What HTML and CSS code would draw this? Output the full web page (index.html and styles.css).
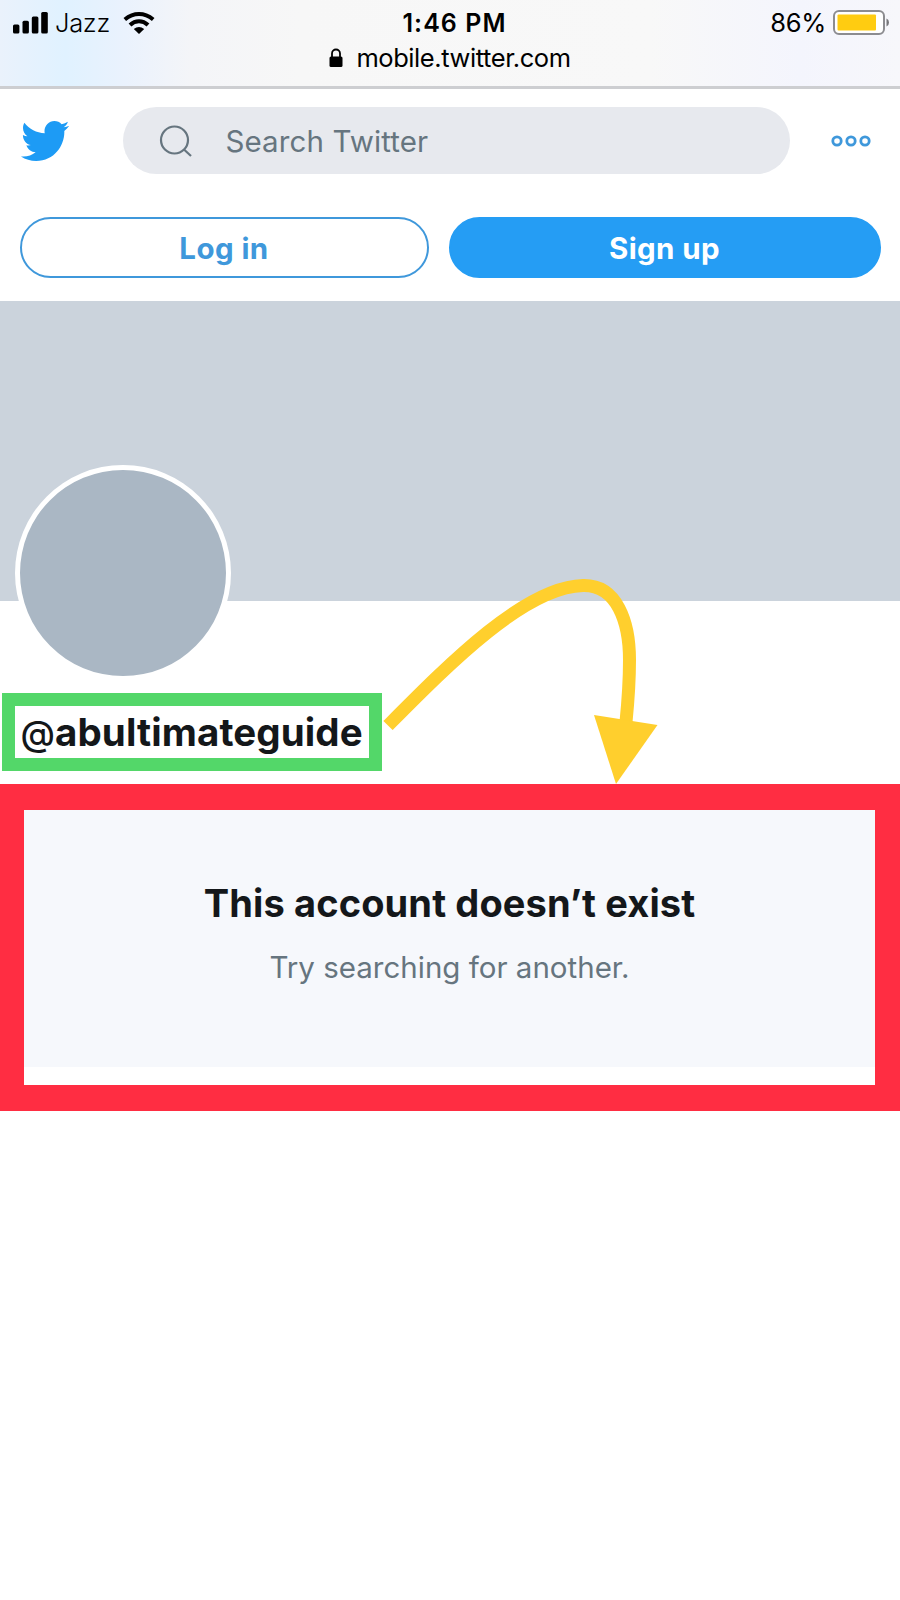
FILE: index.html
```html
<!DOCTYPE html>
<html lang="en">
<head>
<meta charset="utf-8">
<title>Twitter</title>
<link rel="stylesheet" href="styles.css">
</head>
<body>
<header class="browser-bar">
  <div class="status">
    <div class="status-left">
      <svg class="signal" width="36" height="22" viewBox="0 0 36 22"><rect x="0" y="12.500" width="6.400" height="9" rx="1.500"/><rect x="9.500" y="8.700" width="6.400" height="12.800" rx="1.500"/><rect x="18.800" y="4.500" width="6.600" height="17" rx="1.500"/><rect x="28.200" y="0" width="6.600" height="21.500" rx="1.500"/></svg>
      <span class="carrier">Jazz</span>
      <svg class="wifi" width="32" height="22" viewBox="0 0 32 22"><g fill="none" stroke="#000" stroke-width="4"><path d="M1.800 7.500Q8.500 2 16 2T30.200 7.500"/><path d="M7 13Q11 9.200 16 9.200T25 13"/></g><path d="M10.800 17Q16 12.800 21.200 17L16 22Z"/></svg>
    </div>
    <span class="clock">1:46 PM</span>
    <div class="status-right">
      <span class="percent">86%</span>
      <svg width="57" height="26" viewBox="0 0 57 26"><rect x="1" y="1" width="50" height="23" rx="5" fill="#fff" stroke="#8c8c90" stroke-width="2"/><rect x="4.500" y="4.500" width="38.500" height="16" rx="1" fill="#fc1"/><path d="M53.500 8.500Q56 9.500 56 12.500T53.500 16.500Z" fill="#77777b"/></svg>
    </div>
  </div>
  <div class="address">
    <svg width="14" height="20" viewBox="0 0 14 20"><rect x="0.500" y="8.500" width="13" height="10.500" rx="1.500"/><path d="M3 9V5.500a4 4 0 0 1 8 0V9" fill="none" stroke="#000" stroke-width="1.800"/></svg>
    <span class="domain">mobile.twitter.com</span>
  </div>
</header>

<nav class="nav">
  <svg class="bird" width="51" height="52" viewBox="0 0 24 24" preserveAspectRatio="none"><path fill="#1d9bf5" d="M23.643 4.937c-.835.37-1.732.62-2.675.733.962-.576 1.700-1.490 2.048-2.578-.9.534-1.897.922-2.958 1.130-.85-.904-2.060-1.470-3.400-1.470-2.572 0-4.658 2.086-4.658 4.660 0 .364.042.718.12 1.060-3.873-.195-7.304-2.050-9.602-4.868-.4.690-.63 1.490-.63 2.342 0 1.616.823 3.043 2.072 3.878-.764-.025-1.482-.234-2.110-.583v.06c0 2.257 1.605 4.140 3.737 4.568-.392.106-.803.162-1.227.162-.3 0-.593-.028-.877-.082.593 1.850 2.313 3.198 4.352 3.234-1.595 1.250-3.604 1.995-5.786 1.995-.376 0-.747-.022-1.112-.065 2.062 1.323 4.510 2.093 7.140 2.093 8.570 0 13.255-7.098 13.255-13.254 0-.2-.005-.402-.014-.602.910-.658 1.700-1.477 2.323-2.410z"/></svg>
  <div class="search">
    <svg width="34" height="34" viewBox="0 0 34 34" fill="none" stroke="#66757f" stroke-width="2.200"><circle cx="15.500" cy="16" r="13.500"/><path d="M25 25.500L32 32"/></svg>
    <span class="search-label">Search Twitter</span>
  </div>
  <svg class="more" width="40" height="12" viewBox="0 0 40 12" fill="none" stroke="#3f98db" stroke-width="2.800"><circle cx="6" cy="6" r="4.200"/><circle cx="20" cy="6" r="4.200"/><circle cx="34" cy="6" r="4.200"/></svg>
</nav>

<div class="actions">
  <a class="btn login"><span>Log in</span></a>
  <a class="btn signup"><span>Sign up</span></a>
</div>

<main>
  <section class="profile">
    <div class="banner"></div>
    <div class="avatar"></div>
    <div class="handle-box"><span class="handle"><span class="at">@</span>abultimateguide</span></div>
    <svg class="arrow" width="310" height="260" viewBox="0 0 310 260"><path d="M18 165.500C80 103 155 27 213 25.500C247 24.600 259.500 62 259.500 100C259.500 122 258 142 256 162" fill="none" stroke="#ffcf2d" stroke-width="13"/><path d="M224 155L287.500 165L246 224Z" fill="#ffcf2d"/></svg>
  </section>
  <section class="notice">
    <div class="notice-body">
      <h1 class="title">This account doesn’t exist</h1>
      <p class="hint">Try searching for another.</p>
    </div>
  </section>
</main>
</body>
</html>
```
FILE: styles.css
```css
* { box-sizing: border-box; }
body {
  margin: 0;
  min-height: 1600px;
  background: #fff;
  color: #14171a;
  font-family: Inter, "Liberation Sans", sans-serif;
}
svg { display: block; flex: none; }
span { white-space: nowrap; }

.browser-bar {
  height: 89px;
  padding-top: 6px;
  border-bottom: 3px solid #cdced1;
  background: linear-gradient(90deg, #eaf2fc 0, #e0f2ff 65px, #eaf2fd 125px, #f4f5f8 190px, #f7f7f7 300px, #f8f8f8 650px, #f4f5fd 800px, #f7f7fb 900px);
}
.status {
  display: grid;
  grid-template-columns: 1fr auto 1fr;
  height: 34px;
  align-items: center;
  font-size: 25.500px;
  line-height: 34px;
  color: #000;
}
.status-left { display: flex; align-items: center; padding-left: 13px; }
.carrier { width: 68px; margin-left: 6px; font-weight: 300; letter-spacing: -0.300px; }
.clock { margin-left: 9px; font-weight: 600; font-size: 25px; letter-spacing: 1.050px; }
.status-right { display: flex; justify-content: flex-end; align-items: center; gap: 7px; padding-right: 10px; }
.percent { letter-spacing: -0.300px; }
.address { display: flex; align-items: center; justify-content: center; gap: 13px; height: 36px; }
.domain { font-size: 25.500px; line-height: 36px; letter-spacing: -0.420px; color: #000; }

.nav { display: flex; align-items: center; height: 103px; padding-left: 19px; }
.search {
  display: flex;
  align-items: center;
  gap: 33px;
  width: 667px;
  height: 67px;
  margin-left: 53px;
  padding-left: 35.500px;
  border-radius: 34px;
  background: #e7e9ee;
}
.search-label { font-size: 29.500px; letter-spacing: 0.100px; color: #66757f; }
.more { margin-left: 41px; }

.actions { display: grid; grid-template-columns: 409px 432px; gap: 20px; height: 109px; padding: 25px 0 0 19.500px; }
.btn {
  display: flex;
  align-items: center;
  justify-content: center;
  height: 61px;
  border: 2px solid #3f98db;
  border-radius: 31px;
  font-size: 29.500px;
  font-weight: 700;
  line-height: 36px;
  letter-spacing: 0.420px;
}
.login { color: #3f98db; }
.signup { border-color: #259df4; background: #259df4; color: #fff; }

.profile { position: relative; height: 483px; }
.banner { height: 300px; background: #cbd3dc; }
.avatar {
  width: 215.500px;
  height: 216px;
  margin: -136.500px 0 0 15px;
  position: relative;
  border: 5px solid #fff;
  border-radius: 50%;
  background: #aab7c4;
}
.handle-box {
  display: flex;
  align-items: center;
  width: 380px;
  height: 78px;
  margin: 12.500px 0 0 2px;
  padding: 0 0 1px 5.500px;
  border: 13px solid #53d769;
}
.handle { font-size: 38.500px; font-weight: 700; letter-spacing: 0.100px; }
.at { font-size: 35px; font-weight: 500; }
.arrow { position: absolute; left: 370px; top: 259px; z-index: 1; }

.notice {
  height: 327px;
  border: solid #ff2d42;
  border-width: 26px 25px 26px 24px;
}
.notice-body { height: 257px; padding-top: 69px; background: #f6f8fc; text-align: center; }
.title { margin: 0 0 16px; font-size: 38px; line-height: 48px; font-weight: 700; letter-spacing: 0.130px; }
.hint { margin: 0; font-size: 29.500px; line-height: 48px; color: #66757f; }
```
